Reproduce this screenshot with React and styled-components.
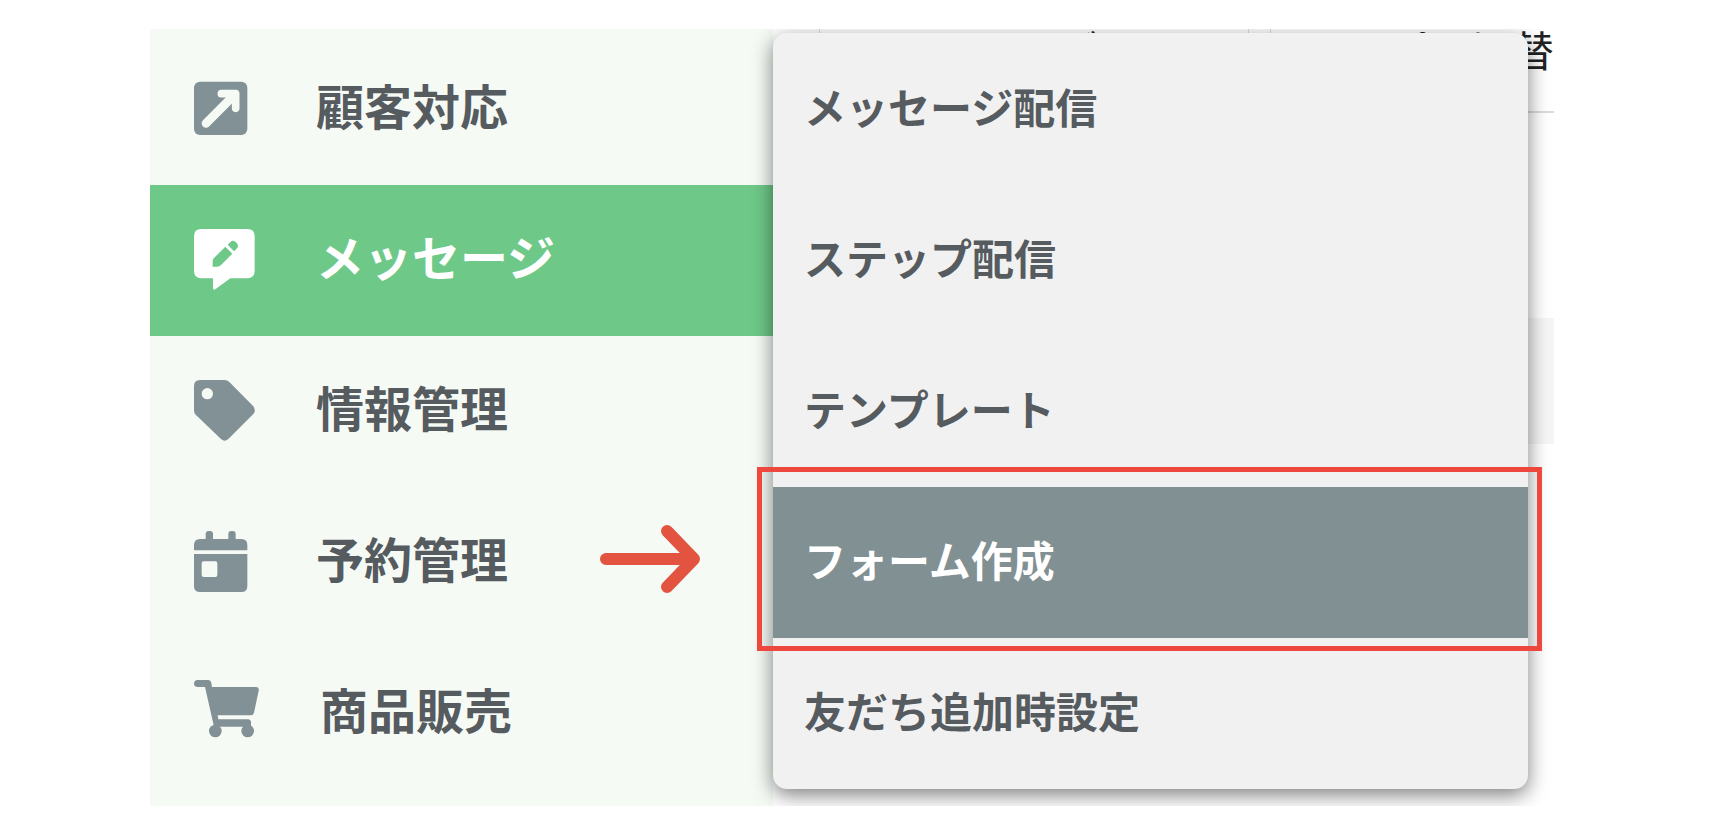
import React from "react";
import styled, { createGlobalStyle, css } from "styled-components";

const GlobalStyle = createGlobalStyle`
  *, *::before, *::after { box-sizing: border-box; }
  body {
    margin: 0;
    background: #fff;
    font-family: "Noto Sans CJK JP", sans-serif;
  }
`;

const Page = styled.div`
  padding: 29px 164px 25px 150px;
`;

const Screen = styled.div`
  display: grid;
  grid-template-columns: minmax(0, 623fr) minmax(0, 781fr);
  overflow: hidden;
`;

const Sidebar = styled.nav`
  padding: 5px 0 17px;
  background: #f5faf5;
`;

const List = styled.ul`
  margin: 0;
  padding: 0;
  list-style: none;
`;

const SideLink = styled.a`
  display: flex;
  align-items: center;
  gap: 61px;
  height: 151px;
  padding: 0 72px 3px 44px;
  color: ${(p) => (p.$active ? "#fff" : "#555b5f")};
  background: ${(p) => (p.$active ? "#6ec988" : "transparent")};
  font-size: 48px;
  font-weight: 700;
  line-height: 72px;
  text-decoration: none;
  white-space: nowrap;
`;

const SideLabel = styled.span`
  padding-bottom: 8px;
`;

const Icon = styled.svg`
  flex: none;
  width: ${(p) => p.$size || 61}px;
  height: ${(p) => p.$size || 61}px;
  fill: ${(p) => (p.$active ? "#fff" : "#829195")};
`;

const Arrow = styled.svg`
  flex: none;
  width: 101px;
  height: 72px;
  margin-left: auto;
  fill: none;
  stroke: #e25440;
  stroke-width: 12;
  stroke-linecap: round;
  stroke-linejoin: round;
`;

const Main = styled.main`
  position: relative;
  background: #fff;
`;

const Tabs = styled.div`
  display: grid;
  grid-template-columns: minmax(0, 430fr) minmax(0, 284fr);
  gap: 21px;
  padding-left: 46px;
`;

const Tab = styled.button`
  height: 84px;
  padding: 0 ${(p) => (p.$last ? 0 : 66)}px 42px 0;
  border: solid #dcdcdc;
  border-width: 0 ${(p) => (p.$last ? 0 : 1)}px 2px 1px;
  background: #fff;
  color: #222;
  font: inherit;
  font-size: 42px;
  line-height: 40px;
  text-align: right;
  white-space: nowrap;
`;

const Band = styled.div`
  height: 126px;
  margin-top: 205px;
  background: #f5f5f5;
`;

const Menu = styled.nav`
  position: absolute;
  top: 4px;
  left: 0;
  right: 26px;
  padding-top: 1px;
  border-radius: 14px;
  background: #f1f1f1;
  box-shadow: 0 6px 20px rgba(0, 0, 0, 0.5);
`;

const highlighted = css`
  color: #fff;
  background: #819093;

  &::after {
    content: "";
    position: absolute;
    inset: -20px -14px -13px -16px;
    border: 5px solid #ee473d;
  }
`;

const MenuLink = styled.a`
  position: relative;
  display: flex;
  align-items: center;
  height: 151px;
  padding: 0 31px 8px;
  color: #555b5f;
  font-size: 42px;
  font-weight: 700;
  line-height: 64px;
  text-decoration: none;
  white-space: nowrap;
  ${(p) => p.$active && highlighted}
`;

const OpenIcon = () => (
  <Icon viewBox="0 0 183 183" aria-hidden="true">
    <rect y="11" width="160" height="160" rx="18" />
    <g fill="none" stroke="#f5faf5" strokeLinecap="round" strokeLinejoin="round">
      <path d="M82 47H125V91" strokeWidth="23" />
      <path d="M36 136L122 50" strokeWidth="26" />
    </g>
  </Icon>
);

const MessageIcon = () => (
  <Icon $active viewBox="0 0 183 183" aria-hidden="true">
    <path d="M22 0H160Q182 0 182 22V126Q182 148 160 148H109L64 181Q57 185 57 177V148H22Q0 148 0 126V22Q0 0 22 0Z" />
    <path
      fill="#6ec988"
      d="M56 113V96Q56 91 60 87L94 53L115 74L81 108Q76 113 69 113ZM101 47L110 38Q117 32 126 40L130 45Q135 52 128 59L120 67Z"
    />
  </Icon>
);

const TagIcon = () => (
  <Icon viewBox="0 0 183 183" aria-hidden="true">
    <path
      fillRule="evenodd"
      d="M18 0H91Q100 0 106 6L178 79Q187 92 178 102L103 177Q92 187 81 177L5 104Q0 99 0 91V18Q0 0 18 0ZM40 24A17 17 0 1 0 40 58A17 17 0 1 0 40 24Z"
    />
  </Icon>
);

const CalendarIcon = () => (
  <Icon viewBox="0 0 183 183" aria-hidden="true">
    <rect x="35" width="22" height="40" rx="9" />
    <rect x="103" width="22" height="40" rx="9" />
    <path d="M0 58V42Q0 24 18 24H142Q160 24 160 42V58Z" />
    <path
      fillRule="evenodd"
      d="M0 69H160V165Q160 183 142 183H18Q0 183 0 165ZM29 91Q23 91 23 97V132Q23 138 29 138H64Q70 138 70 132V97Q70 91 64 91Z"
    />
  </Icon>
);

const CartIcon = () => (
  <Icon $size={65} viewBox="0 0 195 195" aria-hidden="true">
    <path d="M11 0H42Q50 0 52 9L54 21H186Q196 22 194 32L180 98Q178 106 170 106H71L73 118H162Q172 119 171 129V140H60L33 21H11Q0 20 0 11Q0 1 11 0Z" />
    <circle cx="64" cy="153" r="19" />
    <circle cx="161" cy="153" r="19" />
  </Icon>
);

const sections = [
  { label: "顧客対応", Glyph: OpenIcon },
  { label: "メッセージ", Glyph: MessageIcon, active: true },
  { label: "情報管理", Glyph: TagIcon },
  { label: "予約管理", Glyph: CalendarIcon, arrow: true },
  { label: "商品販売", Glyph: CartIcon },
];

const entries = [
  { label: "メッセージ配信" },
  { label: "ステップ配信" },
  { label: "テンプレート" },
  { label: "フォーム作成", active: true },
  { label: "友だち追加時設定" },
];

export default function App() {
  return (
    <Page>
      <GlobalStyle />
      <Screen>
        <Sidebar>
          <List>
            {sections.map(({ label, Glyph, active, arrow }) => (
              <li key={label}>
                <SideLink href="#" $active={active}>
                  <Glyph />
                  <SideLabel>{label}</SideLabel>
                  {arrow && (
                    <Arrow viewBox="0 0 101 72" aria-hidden="true">
                      <path d="M6 34H94M67 6L94 34L67 62" />
                    </Arrow>
                  )}
                </SideLink>
              </li>
            ))}
          </List>
        </Sidebar>
        <Main>
          <Tabs>
            <Tab>がはし</Tab>
            <Tab $last>アプリ切替</Tab>
          </Tabs>
          <Band />
          <Menu>
            <List>
              {entries.map(({ label, active }) => (
                <li key={label}>
                  <MenuLink href="#" $active={active}>
                    {label}
                  </MenuLink>
                </li>
              ))}
            </List>
          </Menu>
        </Main>
      </Screen>
    </Page>
  );
}
